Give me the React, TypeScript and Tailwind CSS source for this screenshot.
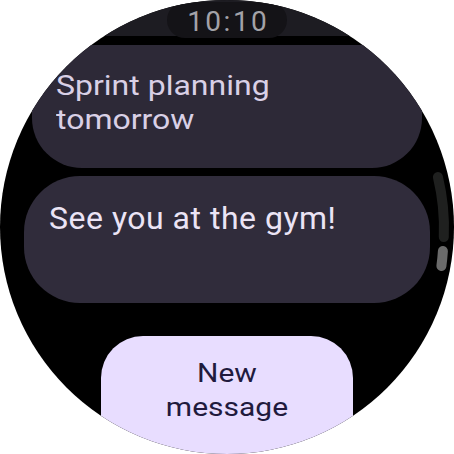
import React from "react";

export default function App() {
  return (
    <div className="w-[454px] h-[454px] bg-white">
      <div
        className="relative w-[454px] h-[454px] rounded-full overflow-hidden bg-black flex flex-col items-center"
        style={{ fontFamily: "Roboto, 'Noto Sans', sans-serif" }}
      >
        {/* previous (dimmed) card */}
        <div className="shrink-0 mt-[-84px] w-[380px] h-[120px] rounded-[52px] bg-[#1d1c22]" />

        {/* card 1 */}
        <div className="shrink-0 mt-[9px] w-[390px] h-[123px] rounded-[50px] bg-[#2d2937] pl-[24px] pt-[24px]">
          <p className="origin-top-left scale-y-[0.88] text-[32px] leading-[38px] text-[#d9d0e6]">
            Sprint planning
            <br />
            tomorrow
          </p>
        </div>

        {/* card 2 */}
        <div className="shrink-0 mt-[8px] w-[406px] h-[127px] rounded-[56px] bg-[#302c3b] pl-[25px] pt-[23px]">
          <p className="text-[32px] leading-[38px] text-[#ebe4f5] tracking-[0.5px]">
            See you at the gym!
          </p>
        </div>

        {/* button */}
        <div className="shrink-0 mt-[33px] w-[252px] h-[130px] rounded-[42px] bg-[#e8ddff] pt-[19px] text-center">
          <p className="origin-top scale-y-[0.89] text-[30px] leading-[39px] text-[#211a3d]">
            New
            <br />
            message
          </p>
        </div>

        {/* time pill */}
        <div className="absolute left-[167px] top-[2px] w-[120px] h-[36px] rounded-full bg-[#141317] flex items-center justify-center">
          <span className="text-[28px] leading-[28px] text-[#a3a2a8] tracking-[2.5px] pl-[2.5px] mt-[4px]">
            10:10
          </span>
        </div>

        {/* scroll indicator */}
        <svg className="absolute left-0 top-0" width="454" height="454" viewBox="0 0 454 454">
          <path
            d="M 437.9 177 A 217 217 0 0 1 443.8 237"
            fill="none"
            stroke="#1f201f"
            strokeWidth="10"
            strokeLinecap="round"
          />
          <path
            d="M 442.9 251 A 217 217 0 0 1 441.4 266"
            fill="none"
            stroke="#6b6b6b"
            strokeWidth="10"
            strokeLinecap="round"
          />
        </svg>
      </div>
    </div>
  );
}
